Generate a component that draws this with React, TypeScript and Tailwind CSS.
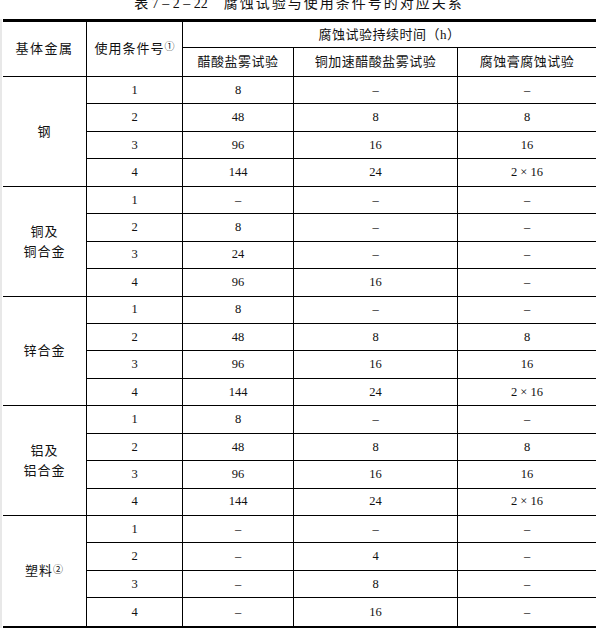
import type { ReactNode } from "react";

type Group = { label: ReactNode; rows: string[][] };

const DASH = "–";

const groups: Group[] = [
  {
    label: "钢",
    rows: [
      ["1", "8", DASH, DASH],
      ["2", "48", "8", "8"],
      ["3", "96", "16", "16"],
      ["4", "144", "24", "2 × 16"],
    ],
  },
  {
    label: (
      <>
        <span>铜及</span>
        <span>铜合金</span>
      </>
    ),
    rows: [
      ["1", DASH, DASH, DASH],
      ["2", "8", DASH, DASH],
      ["3", "24", DASH, DASH],
      ["4", "96", "16", DASH],
    ],
  },
  {
    label: "锌合金",
    rows: [
      ["1", "8", DASH, DASH],
      ["2", "48", "8", "8"],
      ["3", "96", "16", "16"],
      ["4", "144", "24", "2 × 16"],
    ],
  },
  {
    label: (
      <>
        <span>铝及</span>
        <span>铝合金</span>
      </>
    ),
    rows: [
      ["1", "8", DASH, DASH],
      ["2", "48", "8", "8"],
      ["3", "96", "16", "16"],
      ["4", "144", "24", "2 × 16"],
    ],
  },
  {
    label: (
      <span>
        塑料<sup className="relative -top-[2px] text-[10px]">②</sup>
      </span>
    ),
    rows: [
      ["1", DASH, DASH, DASH],
      ["2", DASH, "4", DASH],
      ["3", DASH, "8", DASH],
      ["4", DASH, "16", DASH],
    ],
  },
];

function Cell({ children, last, bottom, className = "" }: { children?: ReactNode; last?: boolean; bottom?: boolean; className?: string }) {
  return (
    <div
      className={`flex items-center justify-center border-black ${last ? "" : "border-r"} ${bottom ? "" : "border-b"} ${className}`}
    >
      {children}
    </div>
  );
}

export default function App() {
  return (
    <div className="h-[630px] w-[596px] overflow-hidden bg-white font-['Liberation_Serif','Noto_Sans_CJK_SC',serif] text-[13px] text-[#111]">
      <div className="h-[19px] overflow-hidden pl-[2px] text-center">
        <div className="-mt-[6px] text-[14px] leading-[20px]">
          <span>表 7 – 2 – 22</span>
          <span className="ml-[16px] tracking-[2px]">腐蚀试验与使用条件号的对应关系</span>
        </div>
      </div>

      <div className="border-l-2 border-[#e8e8e8] pl-px">
        <div className="grid grid-cols-[84px_96px_111px_164px_138px] grid-rows-[26px_29px_repeat(20,27.45px)] border-t-[3px] border-b-2 border-black">
          <Cell className="row-span-2 tracking-[1.5px]">基体金属</Cell>
          <Cell className="row-span-2 tracking-[1px]">
            <span>
              使用条件号<sup className="relative -top-[3px] text-[10px] tracking-normal">①</sup>
            </span>
          </Cell>
          <Cell className="col-span-3 tracking-[0.5px]" last>
            腐蚀试验持续时间（h）
          </Cell>
          <Cell className="tracking-[0.5px]">醋酸盐雾试验</Cell>
          <Cell className="tracking-[0.5px]">铜加速醋酸盐雾试验</Cell>
          <Cell className="tracking-[0.5px]" last>
            腐蚀膏腐蚀试验
          </Cell>

          {groups.map((g, gi) => {
            const lastGroup = gi === groups.length - 1;
            return [
              <Cell key={`g${gi}`} className="row-span-4 flex-col gap-[7px] leading-none tracking-[1px]" bottom={lastGroup}>
                {g.label}
              </Cell>,
              ...g.rows.flatMap((r, ri) =>
                r.map((v, ci) => (
                  <Cell
                    key={`c${gi}-${ri}-${ci}`}
                    className="text-[12.5px]"
                    last={ci === 3}
                    bottom={lastGroup && ri === 3}
                  >
                    {v}
                  </Cell>
                )),
              ),
            ];
          })}
        </div>
      </div>
    </div>
  );
}
